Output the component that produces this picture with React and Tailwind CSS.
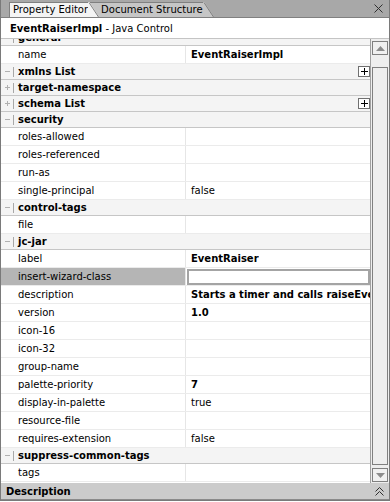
import React from "react";

const rows = [
  { type: "cat", label: "general", sign: "minus" },
  { type: "prop", label: "name", value: "EventRaiserImpl", bold: true },
  { type: "cat", label: "xmlns List", sign: "minus", box: true },
  { type: "cat", label: "target-namespace", sign: "plus" },
  { type: "cat", label: "schema List", sign: "plus", box: true },
  { type: "cat", label: "security", sign: "minus" },
  { type: "prop", label: "roles-allowed" },
  { type: "prop", label: "roles-referenced" },
  { type: "prop", label: "run-as" },
  { type: "prop", label: "single-principal", value: "false" },
  { type: "cat", label: "control-tags", sign: "minus" },
  { type: "prop", label: "file" },
  { type: "cat", label: "jc-jar", sign: "minus" },
  { type: "prop", label: "label", value: "EventRaiser", bold: true },
  { type: "prop", label: "insert-wizard-class", editing: true },
  { type: "prop", label: "description", value: "Starts a timer and calls raiseEvent when it fires", bold: true },
  { type: "prop", label: "version", value: "1.0", bold: true },
  { type: "prop", label: "icon-16" },
  { type: "prop", label: "icon-32" },
  { type: "prop", label: "group-name" },
  { type: "prop", label: "palette-priority", value: "7", bold: true },
  { type: "prop", label: "display-in-palette", value: "true" },
  { type: "prop", label: "resource-file" },
  { type: "prop", label: "requires-extension", value: "false" },
  { type: "cat", label: "suppress-common-tags", sign: "minus" },
  { type: "prop", label: "tags" },
];

const Sign = ({ sign }) => (
  <span className="relative w-[5px] h-[5px] flex items-center justify-center">
    <span className="absolute w-[5px] h-[1px] bg-[#b0b0b0]" />
    {sign === "plus" && <span className="absolute w-[1px] h-[5px] bg-[#b0b0b0]" />}
  </span>
);

const CategoryRow = ({ row }) => (
  <div className="h-[16px] flex items-center bg-[#f4f4f4] border-b border-[#c6c6c6] shrink-0">
    <div className="w-[12px] flex justify-center">
      <Sign sign={row.sign} />
    </div>
    <div className="w-[1px] h-[10px] bg-[#a8a8a8]" />
    <div className="pl-[4px] font-bold flex-1 leading-none whitespace-nowrap">{row.label}</div>
    {row.box && (
      <div className="w-[12px] h-[11px] border border-[#707070] bg-white flex items-center justify-center">
        <svg width="7" height="7" viewBox="0 0 7 7">
          <path d="M0 3.5H7M3.5 0V7" stroke="#000" strokeWidth="1" />
        </svg>
      </div>
    )}
  </div>
);

const PropRow = ({ row }) => (
  <div className="h-[18px] flex border-b border-[#ebebeb] shrink-0">
    <div
      className={
        "w-[185px] pl-[17px] flex items-center border-r border-[#e6e6e6] whitespace-nowrap " +
        (row.editing ? "bg-[#b5b5b5]" : "bg-white")
      }
    >
      {row.label}
    </div>
    <div className="flex-1 min-w-0 flex items-center">
      {row.editing ? (
        <div className="ml-[1px] h-[16px] flex-1 border-2 border-[#a4a4a4] bg-white" />
      ) : (
        <div className={"pl-[5px] whitespace-nowrap overflow-hidden " + (row.bold ? "font-bold" : "")}>
          {row.value}
        </div>
      )}
    </div>
  </div>
);

const ScrollButton = ({ up }) => (
  <div className="h-[14px] mx-[1px] border border-[#808080] bg-[#f0f0f0] flex items-center justify-center shrink-0">
    <svg width="9" height="5" viewBox="0 0 9 5">
      {up ? <path d="M0 5L4.5 0L9 5Z" fill="#8c8c8c" /> : <path d="M0 0L4.5 5L9 0Z" fill="#8c8c8c" />}
    </svg>
  </div>
);

export default function App() {
  return (
    <div className="w-[390px] h-[502px] bg-white font-['DejaVu_Sans',Verdana,sans-serif] text-[10px] text-black">
      <div className="h-[501px] flex flex-col border-l border-r border-b border-[#7a7a7a] overflow-hidden">
        {/* Tabs */}
        <div className="h-[18px] shrink-0 flex items-end bg-[#a8a8a8] border-b border-[#808080] relative">
          <div className="flex items-end pl-[8px]">
            <div className="relative z-10 flex items-end">
              <div className="h-[15px] bg-[#f4f4f4] border-l border-t border-[#808080] pl-[3px] flex items-center leading-none">
                Property Editor
              </div>
              <svg width="11" height="15" viewBox="0 0 11 15" className="block">
                <path d="M0 0H1.5L11 15H0Z" fill="#f4f4f4" />
                <path d="M1 0.5L10.5 15" stroke="#808080" strokeWidth="1" />
              </svg>
            </div>
            <div className="-ml-[9px] flex items-end">
              <div className="h-[15px] bg-[#c6c6c6] border-t border-[#808080] pl-[11px] flex items-center leading-none">
                Document Structure
              </div>
              <svg width="11" height="15" viewBox="0 0 11 15" className="block">
                <path d="M0 0H1.5L11 15H0Z" fill="#c6c6c6" />
                <path d="M1 0.5L10.5 15" stroke="#808080" strokeWidth="1" />
              </svg>
            </div>
          </div>
          <div className="ml-auto mr-[6px] self-center">
            <svg width="9" height="9" viewBox="0 0 9 9" className="block">
              <path d="M0.5 0.5L8.5 8.5M8.5 0.5L0.5 8.5" stroke="#303030" strokeWidth="1" />
            </svg>
          </div>
        </div>

        {/* Title */}
        <div className="h-[21px] shrink-0 flex items-center pl-[9px] border-b border-[#c4c4c4] whitespace-nowrap">
          <span className="font-bold">EventRaiserImpl</span>
          <span>&nbsp;- Java Control</span>
        </div>

        {/* Grid */}
        <div className="h-[444px] shrink-0 flex">
          <div className="w-[370px] overflow-hidden border-r border-[#a0a0a0]">
            <div className="flex flex-col -mt-[9px]">
              {rows.map((row, i) =>
                row.type === "cat" ? <CategoryRow key={i} row={row} /> : <PropRow key={i} row={row} />
              )}
            </div>
          </div>
          <div className="flex-1 bg-[#eeeeee] flex flex-col pt-[2px] pb-[1px]">
            <ScrollButton up />
            <div className="flex-1 flex flex-col pt-[12px] pb-[3px]">
              <div className="flex-1 mx-[1px] border border-[#808080] bg-[#eeeeee]" />
            </div>
            <ScrollButton />
          </div>
        </div>

        {/* Description bar */}
        <div className="h-[17px] shrink-0 flex items-center bg-[#cbcbcb] border-b border-[#8a8a8a] pl-[5px] pr-[5px]">
          <span className="font-bold">Description</span>
          <svg width="9" height="9" viewBox="0 0 9 9" className="ml-auto block">
            <path d="M0.5 4.5L4.5 0.5L8.5 4.5M0.5 8.5L4.5 4.5L8.5 8.5" stroke="#303030" strokeWidth="1" fill="none" />
          </svg>
        </div>
      </div>
    </div>
  );
}
